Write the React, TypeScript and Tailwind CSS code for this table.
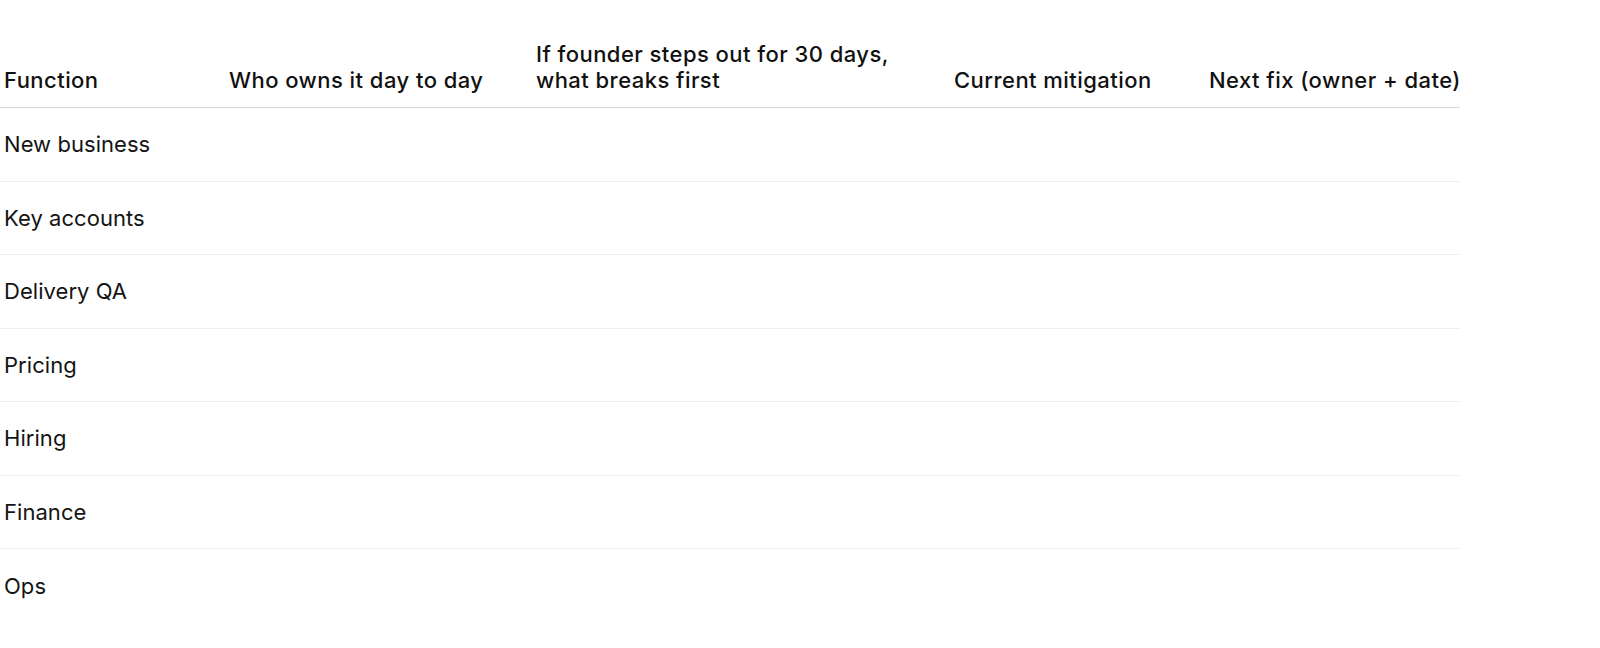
import React from 'react';

const columns = [
  { key: 'fn', label: 'Function', width: 'w-[225px]' },
  { key: 'owner', label: 'Who owns it day to day', width: 'w-[307px]' },
  { key: 'breaks', label: 'If founder steps out for 30 days, what breaks first', width: 'w-[418px]' },
  { key: 'mitigation', label: 'Current mitigation', width: 'w-[255px]' },
  { key: 'next', label: 'Next fix (owner + date)', width: 'w-[255px]' },
];

const rows = ['New business', 'Key accounts', 'Delivery QA', 'Pricing', 'Hiring', 'Finance', 'Ops'];

const App: React.FC = () => {
  return (
    <div className="min-h-screen bg-white text-[#111] font-['Inter','Noto_Sans',sans-serif]">
      <div className="w-[1460px]">
        {/* header */}
        <div className="flex items-end h-[108px] pb-[14px] border-b border-[#d6d6d6]">
          {columns.map((c) => (
            <div
              key={c.key}
              className={`${c.width} shrink-0 pl-[4px] pr-2 text-[22px] leading-[26px] font-medium tracking-[0.45px] whitespace-nowrap`}
            >
              {c.key === 'breaks' ? (
                <>
                  If founder steps out for 30 days,
                  <br />
                  what breaks first
                </>
              ) : (
                c.label
              )}
            </div>
          ))}
        </div>

        {/* body */}
        {rows.map((r, i) => (
          <div
            key={r}
            className={`flex items-center h-[73.5px] ${i < rows.length - 1 ? 'border-b border-[#efefef]' : ''}`}
          >
            {columns.map((c, j) => (
              <div
                key={c.key}
                className={`${c.width} shrink-0 pl-[4px] pr-2 text-[22px] leading-[26px] tracking-[0.05px] text-[#141414]`}
              >
                {j === 0 ? r : ''}
              </div>
            ))}
          </div>
        ))}
      </div>
    </div>
  );
};

export default App;
